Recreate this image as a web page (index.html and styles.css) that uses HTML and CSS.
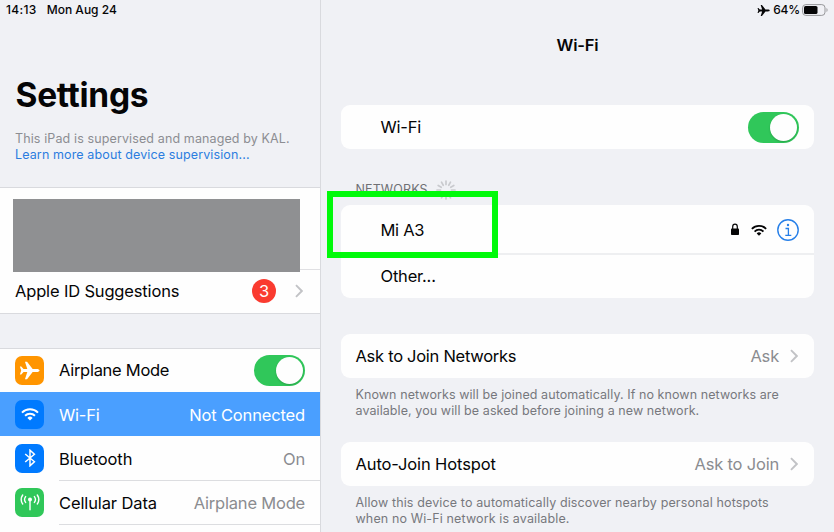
FILE: index.html
```html
<!DOCTYPE html>
<html lang="en">
<head>
<meta charset="utf-8">
<title>Settings</title>
<link rel="stylesheet" href="styles.css">
</head>
<body>
<svg class="defs" aria-hidden="true">
  <symbol id="plane" viewBox="0 0 24 24"><path d="M23.500 12c0-1-1.500-1.700-3.300-1.700h-4.600L9.200 2H6.800l2.700 8.300H5.200L2.600 7.400H1L2.500 12 1 16.600h1.600l2.600-2.900h4.300L6.800 22h2.400l6.400-8.300h4.600c1.800 0 3.300-.7 3.300-1.700z"/></symbol>
  <symbol id="wifi" viewBox="0 0 24 18"><g fill="none" stroke="currentColor" stroke-width="2.600"><path d="M1.300 7.200a15 15 0 0 1 21.400 0"/><path d="M5.400 11.300a9.300 9.300 0 0 1 13.200 0"/></g><path d="M12 17.600l-3.500-3.400a5 5 0 0 1 7 0z"/></symbol>
  <symbol id="chevron" viewBox="0 0 8 14"><path d="M1 1.200l5.800 5.800L1 12.800" fill="none" stroke="currentColor" stroke-width="1.900"/></symbol>
</svg>
<div class="screen">
  <aside class="sidebar">
    <div class="status"><span class="time">14:13</span><span class="date">Mon Aug 24</span></div>
    <h1>Settings</h1>
    <div class="supervision"><p class="managed">This iPad is supervised and managed by KAL.</p><a class="learn">Learn more about device supervision...</a></div>
    <section class="account">
      <div class="profile"><div class="redacted"></div></div>
      <div class="suggestions"><span class="t-suggest">Apple ID Suggestions</span><span class="badge">3</span><svg class="chev"><use href="#chevron"/></svg></div>
    </section>
    <nav class="menu">
      <div class="item first"><span class="icon orange"><svg width="21" height="21"><use href="#plane"/></svg></span><div class="body"><span class="tight">Airplane Mode</span><span class="toggle"></span></div></div>
      <div class="item selected"><span class="icon blue"><svg width="18" height="14"><use href="#wifi"/></svg></span><div class="body"><span>Wi-Fi</span><span class="value">Not Connected</span></div></div>
      <div class="item"><span class="icon blue"><svg width="12" height="18" viewBox="0 0 12 18"><path d="M1.200 5l9.200 7.800L6 16.800V1.200l4.400 4L1.200 13" fill="none" stroke="currentColor" stroke-width="1.500"/></svg></span><div class="body"><span class="wide">Bluetooth</span><span class="value">On</span></div></div>
      <div class="item"><span class="icon green"><svg width="20" height="18" viewBox="0 0 20 18"><circle cx="10" cy="6.500" r="2"/><g fill="none" stroke="currentColor" stroke-width="1.400" stroke-linecap="round"><path d="M10 7v9.800"/><path d="M5.600 3.600a4.900 4.900 0 0 0 0 5.800M14.400 3.600a4.900 4.900 0 0 1 0 5.800M2.700 2a8 8 0 0 0 0 9M17.300 2a8 8 0 0 1 0 9"/></g></svg></span><div class="body"><span class="wide">Cellular Data</span><span class="value">Airplane Mode</span></div></div>
      <div class="item rest"><div class="body"></div></div>
    </nav>
  </aside>
  <main class="detail">
    <div class="indicators"><svg width="13" height="13"><use href="#plane"/></svg><span class="percent">64%</span><svg width="27" height="12" viewBox="0 0 27 12"><rect x=".6" y=".6" width="22.400" height="10.800" rx="3.200" fill="none" stroke="#96979a"/><rect x="2" y="2" width="13.500" height="8" rx="1.600"/><path d="M24.500 4v4c1.400-.5 1.400-3.500 0-4z" fill="#96979a"/></svg></div>
    <h2>Wi-Fi</h2>
    <div class="card row indent power"><span>Wi-Fi</span><span class="toggle"></span></div>
    <div class="section-title"><span>NETWORKS</span><svg width="22" height="22" viewBox="-11 -11 22 22" stroke="#c9cace" stroke-width="1.700" stroke-linecap="round"><path d="M0-5.500V-9M2.750-4.760L4.500-7.800M4.760-2.750L7.800-4.500M5.500 0H9M4.760 2.750L7.800 4.500M2.750 4.760L4.500 7.800M0 5.500V9M-2.750 4.760L-4.500 7.800M-4.760 2.750L-7.800 4.500M-5.500 0H-9M-4.760-2.750L-7.800-4.500M-2.750-4.760L-4.500-7.800"/></svg></div>
    <div class="card networks">
      <div class="row indent network"><span class="tight">Mi A3</span><div class="signals"><svg width="10" height="13" viewBox="0 0 10 13"><rect x="1" y="5.500" width="8" height="6.500" rx=".8"/><path d="M2.700 6V3.700a2.300 2.600 0 0 1 4.600 0V6" fill="none" stroke="currentColor" stroke-width="1.200"/></svg><svg class="net-wifi" width="16" height="12"><use href="#wifi"/></svg><svg class="info" width="22" height="22" viewBox="0 0 22 22"><circle cx="11" cy="11" r="10.200" fill="none" stroke="currentColor" stroke-width="1.400"/><circle cx="11" cy="6" r="1.200"/><path d="M8.500 9.500h2.900v6.600M8.300 16.300h6" fill="none" stroke="currentColor" stroke-width="1.300"/></svg></div><div class="highlight"></div></div>
      <div class="row indent other"><span>Other...</span></div>
    </div>
    <div class="card row ask"><span class="tight">Ask to Join Networks</span><span class="value">Ask</span><svg class="chev"><use href="#chevron"/></svg></div>
    <p class="note">Known networks will be joined automatically. If no known networks are<br>available, you will be asked before joining a new network.</p>
    <div class="card row hotspot"><span class="wide">Auto-Join Hotspot</span><span class="value">Ask to Join</span><svg class="chev"><use href="#chevron"/></svg></div>
    <p class="note last">Allow this device to automatically discover nearby personal hotspots<br>when no Wi-Fi network is available.</p>
  </main>
</div>
</body>
</html>
```
FILE: styles.css
```css
* { box-sizing: border-box; margin: 0; padding: 0; }
body { width: 834px; height: 532px; overflow: hidden; background: #f0f1f5; color: #050506; font: 16.5px/20px Inter, "Liberation Sans", sans-serif; letter-spacing: -.2px; }
svg { display: block; fill: currentColor; flex: none; }
span { white-space: nowrap; }
.tight { letter-spacing: -.28px; }
.wide { letter-spacing: -.12px; }
.t-suggest { letter-spacing: -.16px; }
.defs { position: absolute; width: 0; height: 0; }
.screen { display: flex; height: 532px; }
.sidebar { width: 321px; flex: none; border-right: 1px solid #d9dade; overflow: hidden; }
.status { display: flex; gap: 10px; height: 20px; padding-left: 6px; font-size: 12px; font-weight: 500; letter-spacing: .1px; }
.time { letter-spacing: .35px; }
.date { letter-spacing: 0; }
h1 { margin-top: 54px; padding-left: 15.5px; font-size: 33.5px; line-height: 42px; letter-spacing: -.3px; }
.supervision { margin-top: 15px; padding-left: 15px; height: 56px; font-size: 12.5px; line-height: 16px; color: #8c8d92; letter-spacing: .12px; }
.learn { display: block; color: #2b7ddf; }
.account { height: 127px; border: solid #d9dade; border-width: 1px 0; background: #fefefe; }
.profile { height: 82px; padding: 11px 0 0 13px; background: linear-gradient(#e0e0e3, #e0e0e3) 300px 81px / 20px 1px no-repeat; }
.redacted { width: 287px; height: 73px; background: #8f9092; }
.suggestions { display: flex; align-items: center; height: 42px; padding: 0 17px 0 15px; }
.badge { width: 24px; height: 24px; margin-left: auto; border-radius: 50%; background: #fa3b30; color: #fff; text-align: center; line-height: 24px; }
.chev { width: 8px; height: 14px; color: #c2c3c6; }
.suggestions .chev { margin-left: 19px; }
.menu { margin-top: 34px; border-top: 1px solid #d9dade; background: #fefefe; }
.item { display: flex; align-items: center; height: 44px; padding-left: 15px; }
.item.first { height: 43px; }
.item.selected { background: #4a9fff; color: #fff; }
.icon { display: grid; place-items: center; width: 29px; height: 29px; border-radius: 7px; color: #fff; flex: none; }
.orange { background: #ff9500; }
.blue { background: #007aff; }
.green { background: #30c759; }
.body { display: flex; align-items: center; justify-content: space-between; flex: 1; height: 45px; margin: 0 0 -1px 15px; padding: 1px 15px 0 0; border-bottom: 1px solid #dcdde0; }
.first .body { height: 43px; margin-bottom: 0; padding-top: 0; }
.first .body, .selected .body { border-bottom-color: transparent; }
.value { color: #8b8c90; }
.selected .value { color: #fff; letter-spacing: -.15px; }
.toggle { width: 51px; height: 31px; padding: 2px; border-radius: 16px; background: #30c75a; }
.toggle::after { content: ""; display: block; width: 27px; height: 27px; margin-left: auto; border-radius: 50%; background: #fefefe; box-shadow: 0 1px 2px #00000030; }
.detail { flex: 1; padding: 0 20px; }
.indicators { display: flex; align-items: center; justify-content: flex-end; height: 20px; margin-right: -15px; font-size: 12px; font-weight: 500; letter-spacing: -.2px; }
.percent { margin: 0 2px 0 3px; }
h2 { height: 50px; margin-top: 15px; text-align: center; font-size: 16.5px; font-weight: 600; line-height: 20px; }
.card { width: 473.500px; margin-left: -.5px; border-radius: 9px; background: #fefefe; }
.row { display: flex; align-items: center; height: 44px; padding: 0 15px; }
.row.indent { padding-left: 40px; }
.power { margin-top: 20px; }
.power .toggle { margin-left: auto; }
.section-title { display: flex; align-items: center; gap: 7px; height: 22px; margin: 30px 0 4px 14.5px; color: #6f7074; font-size: 12.5px; letter-spacing: .12px; }
.network { position: relative; height: 50px; padding-top: 1px; border-bottom: 2px solid #eeeff1; }
.row.other { height: 43px; padding-bottom: 1px; }
.signals { display: flex; align-items: center; margin-left: auto; padding-right: .5px; }
.net-wifi { margin: 0 10px 0 11px; }
.info { color: #267fe8; }
.highlight { position: absolute; left: -14px; top: -14px; width: 171px; height: 67px; border: 6px solid #00fa0a; }
.ask { margin-top: 36px; }
.row .value { margin-left: auto; }
.row .chev { margin: 0 1.500px 0 10.5px; }
.note { height: 56px; margin-top: 8px; padding: 1px 0 0 14.5px; color: #77787d; font-size: 12.5px; line-height: 16px; letter-spacing: .08px; white-space: nowrap; }
.note.last { letter-spacing: .13px; }
```
